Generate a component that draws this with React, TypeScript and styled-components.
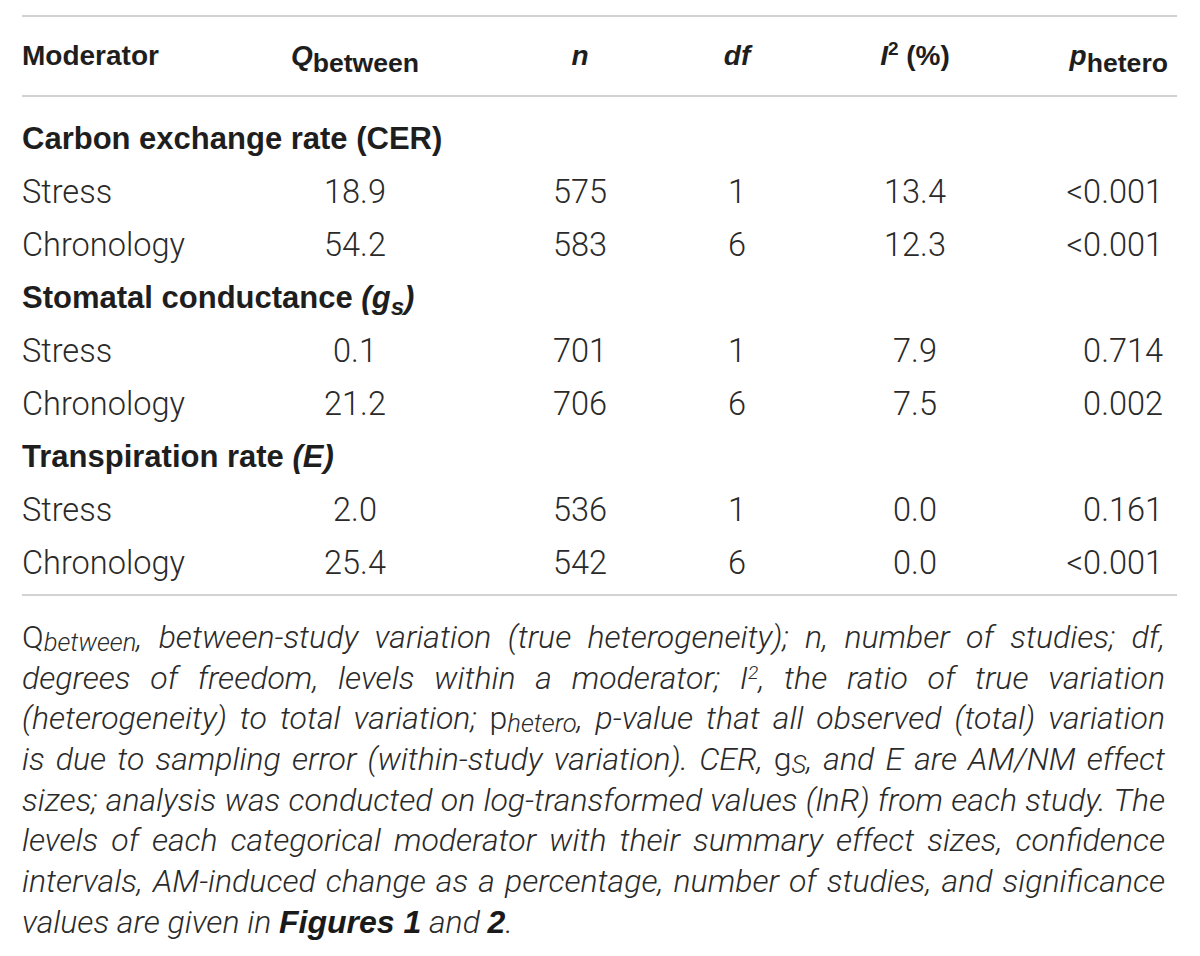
import styled, { createGlobalStyle } from "styled-components";

const GlobalStyle = createGlobalStyle`
    html, body {
        margin: 0;
        padding: 0;
        background: #ffffff;
    }

    body {
        font-family: "Liberation Sans", Arial, sans-serif;
        color: #2a2a2a;
    }
`;

const lightFont = `Roboto, "Liberation Sans", Arial, sans-serif`;

const TableContainer = styled.section`
    width: 1155px;
    margin-left: 22px;
    padding-top: 15px;
`;

const Rule = styled.div`
    height: 2px;
    background-color: #d2d2d2;
`;

const cols = "223px 220px 230px 84px 272px 1fr";

const HeaderRow = styled.div`
    display: grid;
    grid-template-columns: ${cols};
    align-items: center;
    height: 78px;
    padding-right: 9px;
    font-size: 28px;
    font-weight: 700;
    color: #1e1e1e;
`;

const TableBody = styled.div`
    padding: 15px 0 5px;
`;

const DataRow = styled.div`
    display: grid;
    grid-template-columns: ${cols};
    align-items: center;
    height: 53px;
    padding-right: 14px;
    font-family: ${lightFont};
    font-weight: 300;
    font-size: 32.5px;
`;

const GroupRow = styled.div`
    height: 53px;
    line-height: 53px;
    font-size: 31px;
    font-weight: 700;
    color: #1e1e1e;
    white-space: nowrap;
`;

const Cell = styled.div<{ $align?: "left" | "center" | "right" }>`
    text-align: ${(p) => p.$align ?? "center"};
    white-space: nowrap;
`;

const Sub = styled.sub<{ $size?: number; $drop?: number }>`
    font-size: ${(p) => p.$size ?? 0.78}em;
    vertical-align: -${(p) => p.$drop ?? 0.28}em;
    line-height: 0;
`;

const Sup = styled.sup<{ $size?: number }>`
    font-size: ${(p) => p.$size ?? 0.68}em;
    vertical-align: 0.5em;
    line-height: 0;
`;

const Caption = styled.div`
    padding-top: 21px;
    font-family: ${lightFont};
    font-weight: 300;
    font-size: 32px;
    font-style: italic;
    line-height: 40.7px;
    color: #2a2a2a;
`;

const CaptionLine = styled.div<{ $last?: boolean }>`
    height: 40.7px;
    overflow: visible;
    text-align: ${(p) => (p.$last ? "left" : "justify")};
    text-align-last: ${(p) => (p.$last ? "left" : "justify")};
    white-space: nowrap;
    padding-right: 12px;
`;

const Upright = styled.span`
    font-style: normal;
`;

const Bold = styled.b`
    font-family: "Liberation Sans", Arial, sans-serif;
    font-weight: 700;
    color: #1a1a1a;
`;

type Row = { label: string; q: string; n: string; df: string; i2: string; p: string };

const groups: { title: React.ReactNode; rows: Row[] }[] = [
    {
        title: <>Carbon exchange rate (CER)</>,
        rows: [
            { label: "Stress", q: "18.9", n: "575", df: "1", i2: "13.4", p: "<0.001" },
            { label: "Chronology", q: "54.2", n: "583", df: "6", i2: "12.3", p: "<0.001" },
        ],
    },
    {
        title: (
            <>
                Stomatal conductance <i>(g<Sub>s</Sub>)</i>
            </>
        ),
        rows: [
            { label: "Stress", q: "0.1", n: "701", df: "1", i2: "7.9", p: "0.714" },
            { label: "Chronology", q: "21.2", n: "706", df: "6", i2: "7.5", p: "0.002" },
        ],
    },
    {
        title: (
            <>
                Transpiration rate <i>(E)</i>
            </>
        ),
        rows: [
            { label: "Stress", q: "2.0", n: "536", df: "1", i2: "0.0", p: "0.161" },
            { label: "Chronology", q: "25.4", n: "542", df: "6", i2: "0.0", p: "<0.001" },
        ],
    },
];

export default function App() {
    return (
        <>
            <GlobalStyle />
            <TableContainer>
                <Rule />
                <HeaderRow>
                    <Cell $align="left">Moderator</Cell>
                    <Cell>
                        <i>Q</i>
                        <Sub $size={0.95}>between</Sub>
                    </Cell>
                    <Cell>
                        <i>n</i>
                    </Cell>
                    <Cell>
                        <i>df</i>
                    </Cell>
                    <Cell>
                        <i>I</i>
                        <Sup>2</Sup> (%)
                    </Cell>
                    <Cell $align="right">
                        <i>p</i>
                        <Sub $size={0.95}>hetero</Sub>
                    </Cell>
                </HeaderRow>
                <Rule />

                <TableBody>
                    {groups.map((group, gi) => (
                        <div key={gi}>
                            <GroupRow>{group.title}</GroupRow>
                            {group.rows.map((row, ri) => (
                                <DataRow key={ri}>
                                    <Cell $align="left">{row.label}</Cell>
                                    <Cell>{row.q}</Cell>
                                    <Cell>{row.n}</Cell>
                                    <Cell>{row.df}</Cell>
                                    <Cell>{row.i2}</Cell>
                                    <Cell $align="right">{row.p}</Cell>
                                </DataRow>
                            ))}
                        </div>
                    ))}
                </TableBody>
                <Rule />

                <Caption>
                    <CaptionLine>
                        <Upright>Q</Upright>
                        <Sub $size={0.8} $drop={0.12}>between</Sub>, between-study variation (true heterogeneity); n, number of studies; df,
                    </CaptionLine>
                    <CaptionLine>
                        degrees of freedom, levels within a moderator; I<Sup $size={0.6}>2</Sup>, the ratio of true variation
                    </CaptionLine>
                    <CaptionLine>
                        (heterogeneity) to total variation; <Upright>p</Upright>
                        <Sub $size={0.8} $drop={0.12}>hetero</Sub>, p-value that all observed (total) variation
                    </CaptionLine>
                    <CaptionLine>
                        is due to sampling error (within-study variation). CER, <Upright>g</Upright>
                        <Sub $size={0.8} $drop={0.12}>S</Sub>, and E are AM/NM effect
                    </CaptionLine>
                    <CaptionLine>
                        sizes; analysis was conducted on log-transformed values (lnR) from each study. The
                    </CaptionLine>
                    <CaptionLine>
                        levels of each categorical moderator with their summary effect sizes, confidence
                    </CaptionLine>
                    <CaptionLine>
                        intervals, AM-induced change as a percentage, number of studies, and significance
                    </CaptionLine>
                    <CaptionLine $last>
                        values are given in <Bold>Figures 1</Bold> and <Bold>2</Bold>.
                    </CaptionLine>
                </Caption>
            </TableContainer>
        </>
    );
}
